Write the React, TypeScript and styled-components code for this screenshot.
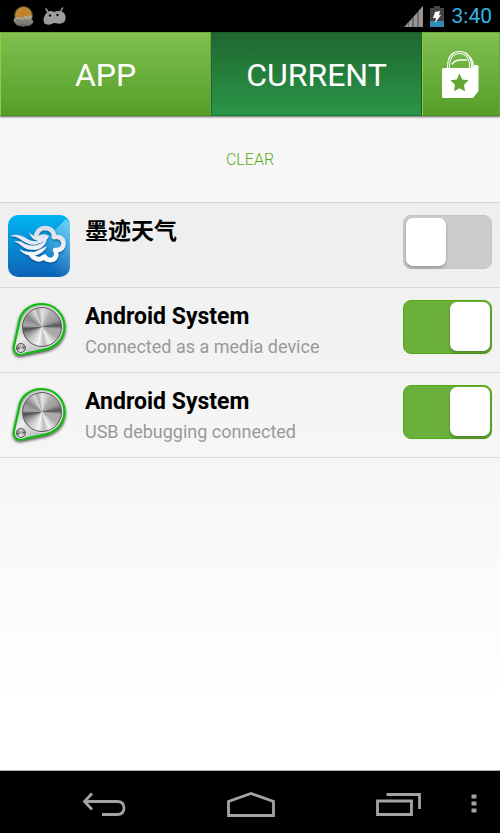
import React, { useId, useState } from "react";
import styled, { createGlobalStyle } from "styled-components";

const GlobalStyle = createGlobalStyle`
  *, *::before, *::after { box-sizing: border-box; }
  body {
    margin: 0;
    background: #fff;
    font-family: Roboto, "Noto Sans CJK SC", sans-serif;
  }
  button, input { font: inherit; margin: 0; }
`;

const Screen = styled.div`
  display: flex;
  flex-direction: column;
  min-height: 100vh;
`;

const StatusBar = styled.header`
  display: flex;
  align-items: center;
  justify-content: space-between;
  height: 32px;
  padding: 0 8px 0 12px;
  background: #000;
`;

const StatusGroup = styled.div`
  display: flex;
  align-items: center;
  gap: 7px;
`;

const Clock = styled.time`
  font-size: 21px;
  line-height: 32px;
  color: #33b5e5;
  margin-left: 1px;
`;

const Tabs = styled.nav`
  position: relative;
  display: grid;
  grid-template-columns: 211fr 211fr 78fr;
  height: 84px;
  box-shadow: 0 1px 2px rgba(0, 0, 0, 0.6);
`;

const Tab = styled.button<{ $active?: boolean }>`
  display: flex;
  align-items: center;
  justify-content: center;
  padding: 2px 0 0;
  border: 1px solid;
  border-color: ${(p) =>
    p.$active
      ? "#1a5a2a #1a5a2a #1a7a34 #1b6b31"
      : "#6da83a #68a63a #4a8d25 #8bd040"};
  border-radius: 0;
  background: ${(p) =>
    p.$active
      ? "linear-gradient(#1f672f, #2b9648)"
      : "linear-gradient(#80bf50, #559e29)"};
  color: #fff;
  font-size: 32px;
  line-height: 38px;
  cursor: pointer;
`;

const ClearBar = styled.div`
  display: flex;
  height: 86px;
  background: #f7f7f7;
`;

const ClearButton = styled.button`
  flex: 1;
  padding: 2px 0 0;
  border: 0;
  background: none;
  color: #5cab20;
  font-size: 16px;
  font-weight: 300;
  line-height: 20px;
  cursor: pointer;
`;

const Content = styled.main`
  flex: 1;
  background: linear-gradient(#eeeeee 0, #f6f6f6 45%, #ffffff 88%);
`;

const List = styled.ul`
  margin: 0;
  padding: 0;
  list-style: none;
  border-top: 1px solid #d4d4d4;
`;

const Row = styled.li`
  display: flex;
  align-items: flex-start;
  min-height: 85px;
  padding: 12px 8px 10px;
  border-bottom: 1px solid #d8d8d8;
`;

const RowIcon = styled.div`
  flex: none;
  width: 62px;
  height: 62px;
  margin-right: 15px;
  svg { display: block; }
`;

const RowText = styled.div`
  flex: 1;
  min-width: 0;
`;

const Title = styled.label`
  display: block;
  color: #000;
  font-size: 23px;
  font-weight: 700;
  line-height: 34px;
`;

const Subtitle = styled.p`
  margin: 0;
  color: #999;
  font-size: 18px;
  line-height: 26px;
`;

const Switch = styled.input`
  appearance: none;
  flex: none;
  display: flex;
  align-items: flex-start;
  justify-content: flex-start;
  width: 89px;
  height: 54px;
  padding: 2px 1px 0;
  border: 1px solid #c4c4c4;
  border-radius: 8px;
  background: #cbcbcb;
  cursor: pointer;

  &::before {
    content: "";
    width: 40px;
    height: 48px;
    margin-left: 1px;
    border-radius: 7px;
    background: #fff;
    box-shadow: 0 2px 3px rgba(0, 0, 0, 0.25);
  }

  &:checked {
    justify-content: flex-end;
    padding-top: 1px;
    border-color: #55a812;
    background: #6cb03c;
  }

  &:checked::before { height: 49px; }
`;

const NavBar = styled.footer`
  display: grid;
  grid-template-columns: 1fr 44px 100px 50px 100px 46px 1fr;
  align-items: center;
  height: 63px;
  padding-left: 4px;
  border-top: 1px solid #aab0aa;
  background: #000;
`;

const NavButton = styled.button<{ $column: number; $end?: boolean }>`
  grid-column: ${(p) => p.$column};
  grid-row: 1;
  display: flex;
  align-items: center;
  justify-content: ${(p) => (p.$end ? "flex-end" : "center")};
  height: 62px;
  padding: ${(p) => (p.$end ? "4px 23px 0 0" : "4px 0 0")};
  border: 0;
  background: none;
  color: #a3a3a3;
  cursor: pointer;
  svg { flex: none; display: block; }
`;

const WeatherStatus = () => (
  <svg width="24" height="24" viewBox="0 0 24 24" aria-hidden="true">
    <defs>
      <radialGradient id="sun" cx=".5" cy=".4" r=".6">
        <stop offset="0" stopColor="#c27a20" />
        <stop offset=".65" stopColor="#bd8b3b" />
        <stop offset="1" stopColor="#655219" />
      </radialGradient>
      <linearGradient id="mist" x2="0" y2="1">
        <stop stopColor="#bbb5a7" />
        <stop offset="1" stopColor="#605e59" />
      </linearGradient>
    </defs>
    <circle cx="11.5" cy="11.5" r="9" fill="url(#sun)" stroke="#514519" />
    <path
      d="M3 19a3 3 0 0 1 0-5q2-2 4-.3 2-1.700 4 .6 2-4 5-1.300 4-3 4 .500l-1 1.500q4 2 1 5-3 3-6 1.800-3 2-6 0-3 1-5-2.800Z"
      fill="url(#mist)"
    />
    <path d="m4 17 3-1 3 2 3-2 3 1 3-1" fill="none" stroke="#77736b" />
  </svg>
);

const AndroidHead = () => (
  <svg width="23" height="20" viewBox="0 0 23 20" aria-hidden="true">
    <path
      d="m3 3 2.500 4M19.500 2 17.500 6"
      stroke="#999"
      strokeWidth="1.500"
      strokeLinecap="round"
    />
    <path
      d="M.5 14Q1 9 4 6.500 7 4 11 6q3-1.500 6-1 5 1 5.500 5.500.5 4-2 6-3 2-8 .5Q10 17 8.500 18q-3 1.300-6 0Q.5 17 .5 14Z"
      fill="#9c9c9c"
    />
    <circle cx="7" cy="9.500" r="1.200" fill="#111" />
    <circle cx="14.500" cy="9" r="1.200" fill="#111" />
  </svg>
);

const Signal = () => (
  <svg width="19" height="22" viewBox="0 0 19 22" aria-hidden="true">
    <path d="M0 22 19 1v21Z" fill="#706a6a" />
    <path d="M1 21.500 4 18v4H1ZM5 17l3-3v8H5Zm5-5.500 3-3.300V22h-3Zm5-6L19 1v21h-4Z" fill="#999393" />
  </svg>
);

const Battery = () => (
  <svg width="14" height="21" viewBox="0 0 14 21" aria-hidden="true">
    <path d="M0 2h4V0h6v2h4v19H0Z" fill="#444" />
    <path d="M0 15h14v6H0Z" fill="#2f8db4" />
    <path d="m5 6 5-1-1 4h2l-6 8 1-5H3Z" fill="#fff" />
  </svg>
);

const ShoppingBag = () => (
  <svg width="38" height="50" viewBox="0 0 38 50" aria-hidden="true">
    <path d="M24 5.500q7 1 7 11V19" fill="none" stroke="#fff" strokeWidth="1.500" />
    <path d="M6.500 19v-3Q7 2.500 17.500 2.500T28.500 16v3" fill="none" stroke="#fff" strokeWidth="3" />
    <path d="M6.500 18v-2Q7 2.500 17.500 2.500T28.500 16v2" fill="none" stroke="#72b444" strokeWidth="1" />
    <path d="M10 14.500Q12 10 19 10h6" fill="none" stroke="#fff" strokeWidth="1.500" />
    <path
      d="M1.500 18H32v-3h3q1.500 0 1.500 1.500V41L31 48H1.500Q0 48 0 46.500v-27Q0 18 1.500 18Z"
      fill="#fff"
    />
    <path d="m17.500 23.500 2.800 6 6.200.8-4.500 4.500 1 6.400-5.500-3-5.500 3 1-6.400-4.500-4.500 6.200-.8Z" fill="#60a631" />
  </svg>
);

const MojiWeather = () => (
  <svg width="62" height="62" viewBox="0 0 62 62" role="img" aria-label="墨迹天气">
    <defs>
      <linearGradient id="sky" x2="0" y2="1">
        <stop stopColor="#00b5f4" />
        <stop offset=".5" stopColor="#078bd3" />
        <stop offset="1" stopColor="#0e62b6" />
      </linearGradient>
      <linearGradient id="shine" x1="1" x2=".4" y2=".8">
        <stop stopColor="#fff" stopOpacity=".45" />
        <stop offset="1" stopColor="#fff" stopOpacity="0" />
      </linearGradient>
      <linearGradient id="silver" gradientUnits="userSpaceOnUse" x1="0" y1="10" x2="0" y2="47">
        <stop stopColor="#d3d9e8" />
        <stop offset=".5" stopColor="#e9edf5" />
        <stop offset="1" stopColor="#fff" />
      </linearGradient>
      <filter id="lift" x="-20%" y="-20%" width="140%" height="150%">
        <feDropShadow dx="0" dy="1.500" stdDeviation="1" floodColor="#034d91" floodOpacity=".8" />
      </filter>
    </defs>
    <rect width="62" height="62" rx="10" fill="url(#sky)" />
    <path d="M58 4 25 37V62h27a10 10 0 0 0 10-10V10a10 10 0 0 0-4-6Z" fill="url(#shine)" />
    <g filter="url(#lift)">
      <path
        d="M28.500 19.500C30 15 33.500 13 37 13C43 13 46.500 17 46 22C52 21 55.500 24 55.500 28.500C55.500 33 52 35.500 47 35C50 40 47 45 42.500 45Q38 45 36.500 41.500Q32 45.500 28 43.500Q24 42 23 39"
        fill="none"
        stroke="url(#silver)"
        strokeWidth="4.500"
        strokeLinecap="round"
        strokeLinejoin="round"
      />
      <path d="M21 17Q25 22 31 20.500Q37 18 41 21Q38 28 28 28Q31 26 29 25.500Q23 24 21 17Z" fill="url(#silver)" />
      <path d="M2 21Q10 18 17 22.500Q24 27.500 31 26L34 27Q28 31 21 29Q16 27 12 24Q8 21 2 21Z" fill="url(#silver)" />
      <path d="M6 26.500Q12 25 17 29Q26 33 34 28Q37 26 39 23Q38 32 29 34.500Q20 36 14 31Q10 27 6 26.500Z" fill="url(#silver)" />
      <path d="M11 34Q20 39 28 36.500Q35 33 39 31Q36 38 27 40.500Q17 41.500 11 34Z" fill="url(#silver)" />
    </g>
  </svg>
);

const BrushedMetal = styled.div`
  width: 100%;
  height: 100%;
  border: 1px solid #555;
  border-radius: 50%;
  background: conic-gradient(
    #e6e6e6 0deg,
    #b0b0b0 30deg,
    #999 65deg,
    #555 85deg,
    #aaa 98deg,
    #aaa 125deg,
    #f2f2f2 155deg,
    #bbb 172deg,
    #f4f4f4 192deg,
    #c4c4c4 225deg,
    #8d8d8d 248deg,
    #4c4c4c 263deg,
    #a8a8a8 275deg,
    #888 305deg,
    #d8d8d8 335deg,
    #aaa 345deg,
    #e6e6e6 360deg
  );
`;

const MetalDisc = ({ x, y, r }: { x: number; y: number; r: number }) => (
  <g>
    <circle cx={x} cy={y} r={r + 1} fill="#ddd" />
    <foreignObject x={x - r} y={y - r} width={r * 2} height={r * 2}>
      <BrushedMetal />
    </foreignObject>
  </g>
);

const DialIcon = () => {
  const id = useId();
  const outline =
    "M11.200 22C13 11 22 4 33.500 4A22.800 22.800 0 0 1 56.500 27C56.500 39 48 47 37 49.500L15 54C9 55.500 5 52 6 46Z";
  return (
    <svg width="62" height="62" viewBox="0 0 62 62" overflow="visible" aria-hidden="true">
      <defs>
        <linearGradient id={`${id}plate`} x2=".8" y2="1">
          <stop stopColor="#888" />
          <stop offset=".5" stopColor="#eee" />
          <stop offset="1" stopColor="#999" />
        </linearGradient>
        <filter id={`${id}shadow`} x="-20%" y="-20%" width="150%" height="150%">
          <feDropShadow dx="0" dy="1.500" stdDeviation="1.500" floodColor="#000" floodOpacity=".75" />
        </filter>
      </defs>
      <path
        d={outline}
        fill={`url(#${id}plate)`}
        stroke="#0bbd0b"
        strokeWidth="2.200"
        filter={`url(#${id}shadow)`}
      />
      <MetalDisc x={34} y={27} r={20} />
      <MetalDisc x={13} y={48} r={5} />
    </svg>
  );
};

const BackIcon = () => (
  <svg width="44" height="25" viewBox="0 0 44 25" fill="none" stroke="currentColor" strokeWidth="2.800" aria-hidden="true">
    <path d="M10 1.500 2.500 9.500l7.500 8M2.500 9.500H35q7 0 7 6.500t-7 6.500H20" />
  </svg>
);

const HomeIcon = () => (
  <svg width="50" height="27" viewBox="0 0 50 27" fill="none" stroke="currentColor" strokeWidth="2.800" aria-hidden="true">
    <path d="M2.500 24.500V10.500L25 2.500l22.500 8v14Z" />
  </svg>
);

const RecentIcon = () => (
  <svg width="46" height="25" viewBox="0 0 46 25" fill="none" stroke="currentColor" strokeWidth="2.800" aria-hidden="true">
    <path d="M1.500 9h34v13.500h-34ZM10.500 2.500h33V17" />
  </svg>
);

const MenuIcon = () => (
  <svg width="6" height="20" viewBox="0 0 6 20" fill="currentColor" aria-hidden="true">
    <path d="M.5.500h5v4h-5Zm0 7h5v4h-5Zm0 7h5v4h-5Z" />
  </svg>
);

type Notice = { title: string; detail?: string; icon: React.ReactNode; on: boolean };

const notices: Notice[] = [
  { title: "墨迹天气", icon: <MojiWeather />, on: false },
  { title: "Android System", detail: "Connected as a media device", icon: <DialIcon />, on: true },
  { title: "Android System", detail: "USB debugging connected", icon: <DialIcon />, on: true },
];

const NoticeRow = ({ title, detail, icon, on }: Notice) => {
  const id = useId();
  const [checked, setChecked] = useState(on);
  return (
    <Row>
      <RowIcon>{icon}</RowIcon>
      <RowText>
        <Title htmlFor={id}>{title}</Title>
        {detail && <Subtitle>{detail}</Subtitle>}
      </RowText>
      <Switch
        id={id}
        type="checkbox"
        role="switch"
        checked={checked}
        onChange={(e) => setChecked(e.target.checked)}
      />
    </Row>
  );
};

export default function App() {
  const [tab, setTab] = useState("current");
  return (
    <Screen>
      <GlobalStyle />
      <StatusBar>
        <StatusGroup>
          <WeatherStatus />
          <AndroidHead />
        </StatusGroup>
        <StatusGroup>
          <Signal />
          <Battery />
          <Clock>3:40</Clock>
        </StatusGroup>
      </StatusBar>
      <Tabs>
        <Tab $active={tab === "app"} onClick={() => setTab("app")}>APP</Tab>
        <Tab $active={tab === "current"} onClick={() => setTab("current")}>CURRENT</Tab>
        <Tab aria-label="Store">
          <ShoppingBag />
        </Tab>
      </Tabs>
      <ClearBar>
        <ClearButton>CLEAR</ClearButton>
      </ClearBar>
      <Content>
        <List>
          {notices.map((notice, i) => (
            <NoticeRow key={i} {...notice} />
          ))}
        </List>
      </Content>
      <NavBar>
        <NavButton $column={2} aria-label="Back"><BackIcon /></NavButton>
        <NavButton $column={4} aria-label="Home"><HomeIcon /></NavButton>
        <NavButton $column={6} aria-label="Recent apps"><RecentIcon /></NavButton>
        <NavButton $column={7} $end aria-label="Menu"><MenuIcon /></NavButton>
      </NavBar>
    </Screen>
  );
}
